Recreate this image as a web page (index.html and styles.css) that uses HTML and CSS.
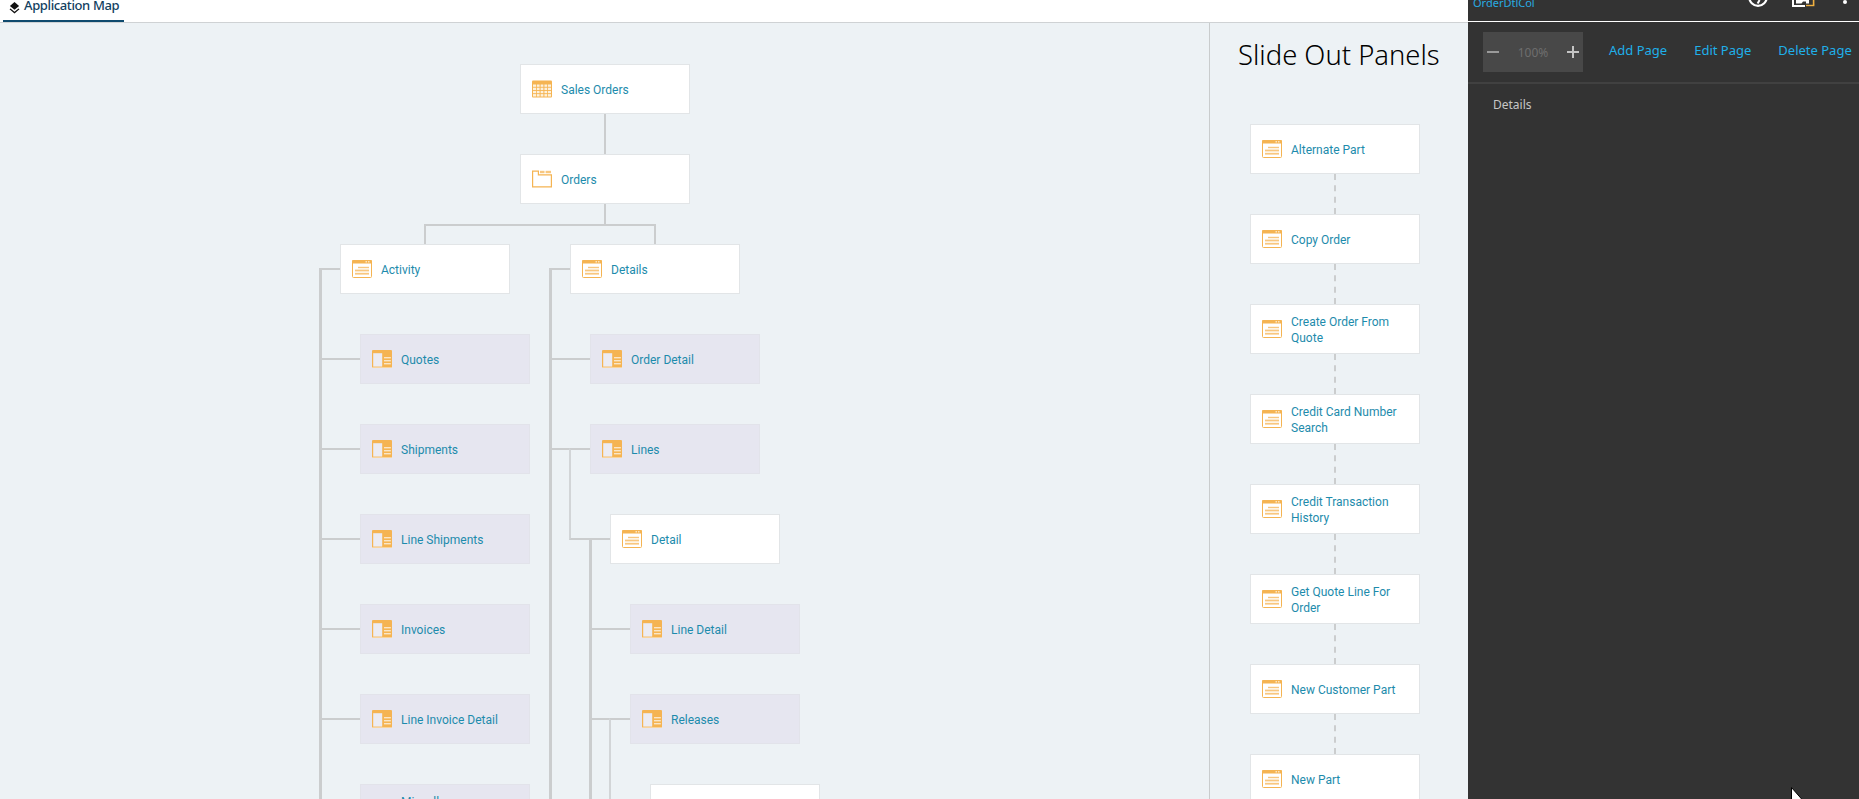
FILE: index.html
```html
<!DOCTYPE html>
<html lang="en">
<head>
<meta charset="utf-8">
<title>Application Map</title>
<link rel="stylesheet" href="styles.css">
</head>
<body>
<svg class="sprite" width="0" height="0" aria-hidden="true">
  <symbol id="i-grid" viewBox="0 0 20 17">
    <rect width="20" height="17" rx="1" fill="#f5b452"/>
    <g fill="#fdf1dc">
      <rect x="1" y="4" width="3" height="2.3"/><rect x="4.8" y="4" width="2.8" height="2.3"/><rect x="8.6" y="4" width="2.8" height="2.3"/><rect x="12.4" y="4" width="2.8" height="2.3"/><rect x="16" y="4" width="3" height="2.3"/>
      <rect x="1" y="7.2" width="3" height="2.3"/><rect x="4.8" y="7.2" width="2.8" height="2.3"/><rect x="8.6" y="7.2" width="2.8" height="2.3"/><rect x="12.4" y="7.2" width="2.8" height="2.3"/><rect x="16" y="7.2" width="3" height="2.3"/>
      <rect x="1" y="10.4" width="3" height="2.3"/><rect x="4.8" y="10.4" width="2.8" height="2.3"/><rect x="8.6" y="10.4" width="2.8" height="2.3"/><rect x="12.4" y="10.4" width="2.8" height="2.3"/><rect x="16" y="10.4" width="3" height="2.3"/>
      <rect x="1" y="13.6" width="3" height="2.4"/><rect x="4.8" y="13.6" width="2.8" height="2.4"/><rect x="8.6" y="13.6" width="2.8" height="2.4"/><rect x="12.4" y="13.6" width="2.8" height="2.4"/><rect x="16" y="13.6" width="3" height="2.4"/>
    </g>
  </symbol>
  <symbol id="i-folder" viewBox="0 0 20 17">
    <path d="M.6.6H6.4V4.4H19.4V16.4H.6Z" fill="#fff" stroke="#f5b452" stroke-width="1.2"/>
    <rect x="8" y=".3" width="4.5" height="2.4" fill="#f8c77f"/>
    <rect x="13.6" y=".3" width="5.4" height="2.4" fill="#f8c77f"/>
  </symbol>
  <symbol id="i-page" viewBox="0 0 20 18">
    <rect x=".5" y=".5" width="19" height="17" rx="1" fill="#fff" stroke="#f5b452"/>
    <rect width="20" height="3.4" rx="1" fill="#f5b452"/>
    <rect x="13.6" y="1.2" width="1.2" height="1.2" fill="#fff"/>
    <rect x="16.2" y="1.2" width="1.2" height="1.2" fill="#fff"/>
    <g fill="#f8c77f">
      <rect x="6" y="6.8" width="11" height="1.4"/>
      <rect x="3" y="9.6" width="14" height="1.8"/>
      <rect x="3" y="12.8" width="14" height="1.8"/>
    </g>
  </symbol>
  <symbol id="i-split" viewBox="0 0 20 18">
    <rect width="20" height="18" rx="1" fill="#f5b452"/>
    <rect y="17" width="20" height="1" fill="#f9d49c"/>
    <rect x="1.2" y="3.2" width="9" height="13.4" fill="#ececf3"/>
    <g fill="#fbe6c6">
      <rect x="12" y="7" width="6.8" height="1.4"/>
      <rect x="12" y="10" width="6.8" height="1.4"/>
      <rect x="12" y="13" width="6.8" height="1.4"/>
    </g>
  </symbol>
</svg>

<div class="app">
  <div class="workspace">
    <header class="tabbar">
      <div class="tab">
        <svg class="tab-icon" viewBox="0 0 12 13" aria-hidden="true">
          <path d="M6 0 11 4.2 6 8.4 1 4.2Z" fill="#111"/>
          <path d="M1.6 7 6 10.6 10.4 7 11.4 7.9 6 12.4.6 7.9Z" fill="#111"/>
        </svg>
        <span class="tab-label">Application Map</span>
      </div>
    </header>
    <div class="content">
      <main class="map">
        <div class="root-col">
          <a class="node"><svg class="ico ico-grid"><use href="#i-grid"/></svg><span class="label">Sales Orders</span></a>
          <div class="stem"></div>
          <a class="node"><svg class="ico ico-grid"><use href="#i-folder"/></svg><span class="label">Orders</span></a>
          <div class="stem stem-short"></div>
        </div>
        <div class="branches">
          <section class="branch">
            <a class="node"><svg class="ico"><use href="#i-page"/></svg><span class="label">Activity</span></a>
            <ul class="kids">
              <li class="kid"><a class="node tinted"><svg class="ico"><use href="#i-split"/></svg><span class="label">Quotes</span></a></li>
              <li class="kid"><a class="node tinted"><svg class="ico"><use href="#i-split"/></svg><span class="label">Shipments</span></a></li>
              <li class="kid"><a class="node tinted"><svg class="ico"><use href="#i-split"/></svg><span class="label">Line Shipments</span></a></li>
              <li class="kid"><a class="node tinted"><svg class="ico"><use href="#i-split"/></svg><span class="label">Invoices</span></a></li>
              <li class="kid"><a class="node tinted"><svg class="ico"><use href="#i-split"/></svg><span class="label">Line Invoice Detail</span></a></li>
              <li class="kid"><a class="node tinted"><svg class="ico"><use href="#i-split"/></svg><span class="label">Miscellaneous Charges</span></a></li>
            </ul>
          </section>
          <section class="branch">
            <a class="node"><svg class="ico"><use href="#i-page"/></svg><span class="label">Details</span></a>
            <ul class="kids">
              <li class="kid"><a class="node tinted"><svg class="ico"><use href="#i-split"/></svg><span class="label">Order Detail</span></a></li>
              <li class="kid">
                <a class="node tinted"><svg class="ico"><use href="#i-split"/></svg><span class="label">Lines</span></a>
                <ul class="kids thin">
                  <li class="kid end">
                    <a class="node"><svg class="ico"><use href="#i-page"/></svg><span class="label">Detail</span></a>
                    <ul class="kids">
                      <li class="kid"><a class="node tinted"><svg class="ico"><use href="#i-split"/></svg><span class="label">Line Detail</span></a></li>
                      <li class="kid">
                        <a class="node tinted"><svg class="ico"><use href="#i-split"/></svg><span class="label">Releases</span></a>
                        <ul class="kids thin">
                          <li class="kid"><a class="node"></a></li>
                        </ul>
                      </li>
                    </ul>
                  </li>
                </ul>
              </li>
            </ul>
          </section>
        </div>
      </main>
      <aside class="slides">
        <h2 class="slides-title">Slide Out Panels</h2>
        <div class="slide-list">
          <a class="node"><svg class="ico"><use href="#i-page"/></svg><span class="label">Alternate Part</span></a>
          <a class="node"><svg class="ico"><use href="#i-page"/></svg><span class="label">Copy Order</span></a>
          <a class="node"><svg class="ico"><use href="#i-page"/></svg><span class="label">Create Order From Quote</span></a>
          <a class="node"><svg class="ico"><use href="#i-page"/></svg><span class="label">Credit Card Number Search</span></a>
          <a class="node"><svg class="ico"><use href="#i-page"/></svg><span class="label">Credit Transaction History</span></a>
          <a class="node"><svg class="ico"><use href="#i-page"/></svg><span class="label">Get Quote Line For Order</span></a>
          <a class="node"><svg class="ico"><use href="#i-page"/></svg><span class="label">New Customer Part</span></a>
          <a class="node"><svg class="ico"><use href="#i-page"/></svg><span class="label">New Part</span></a>
        </div>
      </aside>
    </div>
  </div>

  <aside class="panel">
    <div class="panel-head">
      <span class="panel-name">OrderDtlCol</span>
      <div class="panel-tools">
        <svg class="tool tool-help" viewBox="0 13 22 7" aria-hidden="true">
          <circle cx="11" cy="10" r="8.8" fill="none" stroke="#fff" stroke-width="2.2"/>
          <path d="M12.6 13 10.6 16.5" stroke="#fff" stroke-width="2" fill="none"/>
        </svg>
        <svg class="tool tool-copy" viewBox="0 0 23 7" aria-hidden="true">
          <path d="M1 0V6H13" fill="none" stroke="#fff" stroke-width="2"/>
          <path d="M4 0V3.5H9.5L11 1.5H14V3.5H17V0Z" fill="#fff"/>
          <path d="M21.6 0V5" stroke="#f0b040" stroke-width="1.6" fill="none"/>
          <path d="M14 5.5H22.4" stroke="#f0b040" stroke-width="1.4" fill="none"/>
        </svg>
        <span class="tool-dot"></span>
      </div>
    </div>
    <div class="panel-bar">
      <div class="zoomer">
        <svg class="zoom-sign sign-minus" viewBox="0 0 12 12" aria-hidden="true"><path d="M0 6H12" stroke-width="2"/></svg>
        <span class="zoom-value">100%</span>
        <svg class="zoom-sign sign-plus" viewBox="0 0 12 12" aria-hidden="true"><path d="M0 6H12M6 0V12" stroke-width="2"/></svg>
      </div>
      <nav class="page-actions">
        <a class="page-action">Add Page</a>
        <a class="page-action">Edit Page</a>
        <a class="page-action">Delete Page</a>
      </nav>
    </div>
    <div class="panel-body">
      <span class="panel-item">Details</span>
    </div>
  </aside>

  <svg class="cursor" viewBox="0 0 12 14" aria-hidden="true">
    <path d="M.5.5V13H11.5Z" fill="#fff" stroke="#000" stroke-width="1"/>
  </svg>
</div>
</body>
</html>
```

FILE: styles.css
```css
*, *::before, *::after { box-sizing: border-box; }

html, body {
  margin: 0;
  height: 100%;
  overflow: hidden;
}

body {
  font-family: "Noto Sans", "Open Sans", sans-serif;
  background: #edf2f5;
}

.sprite { position: absolute; }

.app {
  position: relative;
  display: flex;
  width: 100%;
  height: 100vh;
  overflow: hidden;
}

.workspace {
  width: 1468px;
  flex: none;
  display: flex;
  flex-direction: column;
  min-height: 0;
}

/* tab bar */
.tabbar {
  flex: none;
  height: 23px;
  background: #fff;
  border-bottom: 1px solid #cfd2d4;
  padding-left: 3px;
  display: flex;
}

.tab {
  width: 121px;
  height: 22px;
  border-bottom: 2px solid #0f4a6e;
  padding-left: 6px;
  display: flex;
  align-items: flex-start;
  gap: 4px;
}

.tab-icon {
  width: 11px;
  height: 12px;
  margin-top: 2px;
  flex: none;
}

.tab-label {
  font-size: 13px;
  line-height: 11px;
  font-weight: 500;
  letter-spacing: -0.38px;
  color: #123f5f;
  white-space: nowrap;
}

.content {
  flex: 1;
  display: flex;
  min-height: 0;
}

/* map */
.map {
  width: 1210px;
  flex: none;
  border-right: 1px solid #c9cccd;
  padding-top: 41px;
  overflow: hidden;
}

.root-col { margin-left: 520px; width: 170px; }

.node {
  display: flex;
  align-items: center;
  gap: 9px;
  width: 170px;
  height: 50px;
  padding: 0 8px 0 11px;
  background: #fff;
  border: 1px solid #e2e5e7;
  position: relative;
}

.node.tinted {
  background: #e6e6f0;
  border-color: #e2e3ea;
}

.ico {
  width: 20px;
  height: 18px;
  flex: none;
  margin-top: -1px;
}

.label {
  font-family: Roboto, "Liberation Sans", sans-serif;
  font-size: 12px;
  line-height: 16px;
  padding-top: 2px;
  color: #1d8bac;
}

.stem {
  width: 2px;
  height: 40px;
  margin-left: 84px;
  background: #cbcdce;
}

.stem-short { height: 20px; }

.branches {
  position: relative;
  display: flex;
  gap: 60px;
  margin-top: 20px;
  margin-left: 340px;
}

.branches::before {
  content: "";
  position: absolute;
  top: -20px;
  left: 84px;
  width: 232px;
  height: 20px;
  border: 2px solid #cbcdce;
  border-bottom: 0;
}

.branch { width: 170px; flex: none; }

.kids {
  position: relative;
  list-style: none;
  margin: 0 0 0 20px;
  padding: 0;
}

/* stub from the spine to the parent node */
.kids::before {
  content: "";
  position: absolute;
  left: -41px;
  top: -26px;
  width: 21px;
  height: 26px;
  border-top: 2px solid #cbcdce;
  border-left: 3px solid #cbcdce;
}

.kid {
  position: relative;
  padding-top: 40px;
}

.kid::before {
  content: "";
  position: absolute;
  left: -41px;
  top: 0;
  width: 41px;
  height: 66px;
  border-left: 3px solid #cbcdce;
  border-bottom: 2px solid #cbcdce;
}

.kid::after {
  content: "";
  position: absolute;
  left: -41px;
  top: 66px;
  bottom: 0;
  border-left: 3px solid #cbcdce;
}

.kid.end::after { display: none; }

.thin::before,
.thin > .kid::before,
.thin > .kid::after {
  border-left-width: 2px;
  border-left-color: #d2d5d7;
}

/* slide out panels */
.slides {
  flex: 1;
  overflow: hidden;
  padding-left: 28px;
}

.slides-title {
  margin: 13px 0 0;
  height: 48px;
  font-size: 27.4px;
  line-height: 38px;
  font-weight: 300;
  color: #000;
  white-space: nowrap;
}

.slide-list {
  margin-left: 12px;
  margin-top: 40px;
  display: flex;
  flex-direction: column;
  gap: 40px;
}

.slide-list .node + .node::before {
  content: "";
  position: absolute;
  left: 83px;
  top: -41px;
  height: 40px;
  border-left: 2px dashed #cbcdce;
}

/* dark panel */
.panel {
  flex: 1;
  min-width: 0;
  background: #333;
  display: flex;
  flex-direction: column;
}

.panel-head {
  flex: none;
  height: 22px;
  border-bottom: 1px solid #fff;
  padding-left: 5px;
  display: flex;
  justify-content: space-between;
  align-items: flex-start;
}

.panel-name {
  font-size: 11px;
  line-height: 5px;
  color: #29abe2;
}

.panel-tools {
  display: flex;
  align-items: flex-start;
  padding-right: 12px;
}

.tool-help { width: 22px; height: 7px; margin-right: 23px; }
.tool-copy { width: 23px; height: 7px; margin-right: 28px; }

.tool-dot {
  width: 4px;
  height: 4px;
  border-radius: 50%;
  background: #fff;
}

.panel-bar {
  flex: none;
  height: 40px;
  margin-top: 10px;
  padding-left: 15px;
  display: flex;
}

.zoomer {
  width: 100px;
  height: 40px;
  background: #484848;
  padding: 0 4px;
  display: flex;
  align-items: center;
  justify-content: space-between;
}

.zoom-sign { width: 12px; height: 12px; fill: none; }
.sign-minus { stroke: #9a9a9a; }
.sign-plus { stroke: #c4c4c4; }

.zoom-value {
  font-size: 12px;
  color: #6e6e6e;
}

.page-actions {
  margin-left: 26px;
  display: flex;
  gap: 27px;
  height: 36px;
  align-items: center;
}

.page-action {
  font-size: 13px;
  color: #1fb0ea;
  white-space: nowrap;
}

.panel-body {
  margin-top: 10px;
  border-top: 2px solid #414141;
  padding: 8px 0 0 25px;
}

.panel-item {
  font-size: 12px;
  line-height: 16px;
  color: #c6c6c6;
}

/* pointer captured over the panel */
.cursor {
  position: absolute;
  left: 1791px;
  top: 787px;
  width: 12px;
  height: 14px;
}
```
